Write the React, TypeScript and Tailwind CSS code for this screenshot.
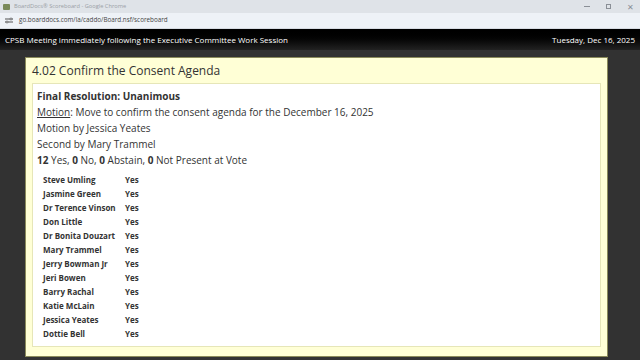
import React from "react";

const votes = [
  "Steve Umling",
  "Jasmine Green",
  "Dr Terence Vinson",
  "Don Little",
  "Dr Bonita Douzart",
  "Mary Trammel",
  "Jerry Bowman Jr",
  "Jeri Bowen",
  "Barry Rachal",
  "Katie McLain",
  "Jessica Yeates",
  "Dottie Bell",
];

export default function App() {
  return (
    <div
      className="w-[640px] h-[360px] overflow-hidden flex flex-col bg-[#323232]"
      style={{ fontFamily: '"Open Sans", "Noto Sans", sans-serif' }}
    >
      {/* Chrome title bar */}
      <div className="h-[13px] bg-[#dfe3e8] flex items-center pl-[3px] pr-[6px] shrink-0">
        <div className="w-[7px] h-[6px] bg-[#7a8a5a] rounded-[1px] mr-[4px]" />
        <span className="text-[5.7px] text-[#9a9fa6] leading-none">BoardDocs® Scoreboard - Google Chrome</span>
        <div className="ml-auto flex items-center gap-[16px] text-[#8a8f96]">
          <div className="w-[6px] h-[1px] bg-[#8a8f96]" />
          <div className="w-[5px] h-[5px] border border-[#8a8f96]" />
          <span className="text-[8px] leading-none">✕</span>
        </div>
      </div>
      {/* Address bar */}
      <div className="h-[16px] bg-[#eef2f7] flex items-center pl-[5px] shrink-0 border-b border-[#d6dbe2]">
        <svg width="8" height="7" viewBox="0 0 8 7" className="mr-[6px]">
          <path d="M0 2h5M7 2h1M0 5h1M3 5h5" stroke="#555" strokeWidth="1" />
          <circle cx="6" cy="2" r="1" fill="none" stroke="#555" strokeWidth="0.8" />
          <circle cx="2" cy="5" r="1" fill="none" stroke="#555" strokeWidth="0.8" />
        </svg>
        <span className="text-[6.3px] text-[#444] leading-none">go.boarddocs.com/la/caddo/Board.nsf/scoreboard</span>
      </div>
      {/* Dark header */}
      <div className="h-[21px] bg-gradient-to-b from-[#000000] to-[#222222] flex items-center justify-between px-[5px] shrink-0">
        <span className="text-[8px] text-white leading-none">
          CPSB Meeting immediately following the Executive Committee Work Session
        </span>
        <span className="text-[8px] text-white leading-none">Tuesday, Dec 16, 2025</span>
      </div>
      {/* Body */}
      <div className="flex-1 pt-[7px] pl-[25px]">
        <div className="w-[583px] h-[300px] bg-[#ffffd6] border border-[#8a8a5a] flex flex-col px-[6px] pb-[9px]">
          <div className="h-[25px] flex items-center text-[12px] text-[#333] leading-none">
            4.02 Confirm the Consent Agenda
          </div>
          <div className="flex-1 bg-white border border-[#e6e6b8] pl-[4px] pt-[4px] text-[#333]">
            <div className="text-[10px] leading-[16px] font-bold">Final Resolution: Unanimous</div>
            <div className="text-[10px] leading-[16px]">
              <span className="underline">Motion</span>: Move to confirm the consent agenda for the December 16, 2025
            </div>
            <div className="text-[10px] leading-[16px]">Motion by Jessica Yeates</div>
            <div className="text-[10px] leading-[16px]">Second by Mary Trammel</div>
            <div className="text-[10px] leading-[16px]">
              <b>12</b> Yes, <b>0</b> No, <b>0</b> Abstain, <b>0</b> Not Present at Vote
            </div>
            <div className="mt-[5px] pl-[6px] flex flex-col">
              {votes.map((n) => (
                <div key={n} className="flex h-[14px] items-center text-[8px] font-bold leading-none">
                  <span className="w-[82px]">{n}</span>
                  <span>Yes</span>
                </div>
              ))}
            </div>
          </div>
        </div>
      </div>
    </div>
  );
}
